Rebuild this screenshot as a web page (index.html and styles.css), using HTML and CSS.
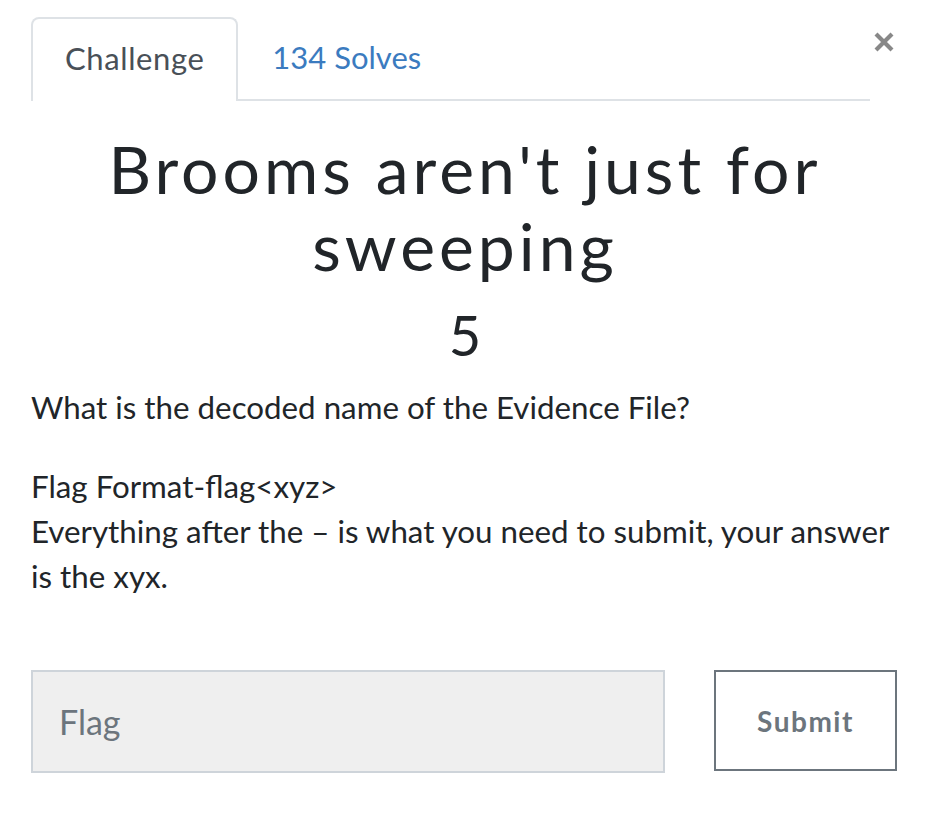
FILE: index.html
```html
<!DOCTYPE html>
<html lang="en">
<head>
<meta charset="utf-8">
<title>Challenge</title>
<link rel="stylesheet" href="styles.css">
</head>
<body>
<div class="modal">
  <div class="modal-head">
    <ul class="tabs">
      <li class="tab active">Challenge</li>
      <li class="tab"><a href="#solves">134 Solves</a></li>
    </ul>
    <button class="close" aria-label="Close">
      <svg width="22" height="22" viewBox="0 0 22 22"><path d="M3 3 L19 19 M19 3 L3 19" stroke="#888" stroke-width="4.2" stroke-linecap="butt"/></svg>
    </button>
  </div>
  <div class="body">
    <h2 class="title">Brooms aren't just for sweeping</h2>
    <h3 class="value">5</h3>
    <div class="desc">
      <p>What is the decoded name of the Evidence File?</p>
      <p>Flag Format-flag&lt;xyz&gt;<br>Everything after the – is what you need to submit, your answer is the xyx.</p>
    </div>
    <form class="submit-row">
      <input class="flag-input" type="text" placeholder="Flag">
      <button class="submit-btn" type="button">Submit</button>
    </form>
  </div>
</div>
</body>
</html>
```
FILE: styles.css
```css
* { box-sizing: border-box; }
html, body { margin: 0; padding: 0; background: #fff; }
body {
  font-family: Lato, "Liberation Sans", sans-serif;
  color: #212529;
}
.modal {
  width: 940px;
  padding: 17px 43px 0 31px;
}
.modal-head {
  display: flex;
  align-items: flex-start;
}
.tabs {
  list-style: none;
  margin: 0;
  padding: 0;
  display: flex;
  width: 839px;
  border-bottom: 2px solid #dee2e6;
}
.tab {
  height: 82px;
  padding: 0 32px 4px;
  display: flex;
  align-items: center;
  font-size: 31px;
  color: #495057;
  border: 2px solid transparent;
  border-bottom: none;
  border-radius: 8px 8px 0 0;
  margin-bottom: -2px;
}
.tab.active {
  border-color: #dee2e6;
  background: #fff;
  height: 84px;
  letter-spacing: 0.6px;
}
.tab a { color: #3b7bbf; text-decoration: none; }
.close {
  margin-left: auto;
  margin-top: 14px;
  margin-right: 2px;
  background: none;
  border: none;
  padding: 0;
  width: 22px;
  height: 22px;
  display: flex;
}
.body { width: 868px; }
.title {
  margin: 29px 0 0;
  text-align: center;
  font-weight: 400;
  font-size: 66px;
  line-height: 77px;
  letter-spacing: 4px;
}
.value {
  margin: 17px 0 0;
  text-align: center;
  font-weight: 400;
  font-size: 56px;
  line-height: 1.2;
}
.desc { margin-top: 17px; }
.desc p {
  margin: 0 0 34px;
  font-size: 31.3px;
  line-height: 45px;
}
.desc p:last-child { margin-bottom: 0; }
.submit-row {
  display: flex;
  align-items: flex-start;
  margin-top: 71px;
  gap: 49px;
}
.flag-input {
  width: 634px;
  height: 103px;
  background: #efefef;
  border: 2px solid #ced4da;
  padding: 0 26px;
  font-family: Lato, "Liberation Sans", sans-serif;
  font-size: 34px;
  color: #495057;
}
.flag-input::placeholder { color: #6c757d; }
.submit-btn {
  width: 183px;
  height: 101px;
  background: #fff;
  border: 2px solid #6c757d;
  font-family: Lato, "Liberation Sans", sans-serif;
  font-weight: 700;
  font-size: 28px;
  letter-spacing: 1.5px;
  color: #6c757d;
}
```
